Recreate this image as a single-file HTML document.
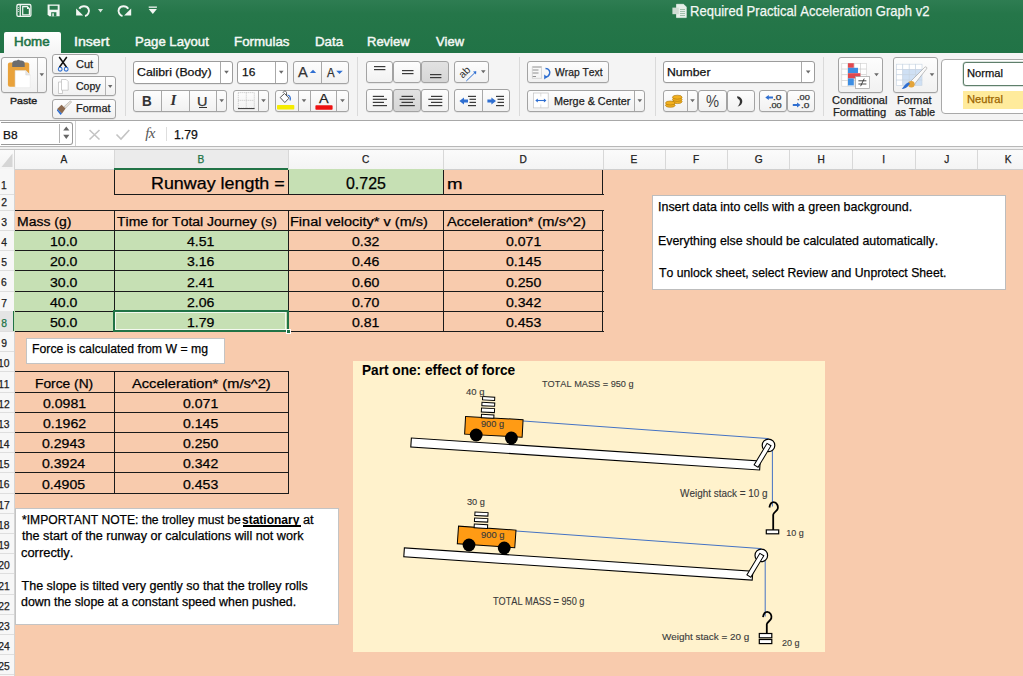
<!DOCTYPE html><html><head><meta charset="utf-8"><style>html,body{margin:0;padding:0;}body{width:1023px;height:676px;overflow:hidden;position:relative;background:#F8CBAD;font-family:'Liberation Sans', sans-serif;}.t{position:absolute;font-family:'Liberation Sans', sans-serif;white-space:pre;font-kerning:none;transform-origin:0 0;-webkit-text-stroke:0.25px;}</style></head><body>
<div style="position:absolute;left:4.00px;top:32.00px;width:56.60px;height:21.00px;background:linear-gradient(#ffffff,#f3f3f3);border-radius:3px 3px 0 0;"></div>
<div style="position:absolute;left:0.00px;top:53.00px;width:1023.00px;height:67.00px;background:#f3f3f3;"></div>
<div style="position:absolute;left:0.00px;top:120.00px;width:1023.00px;height:1.00px;background:#a8a8a8;"></div>
<div style="position:absolute;left:0.00px;top:121.00px;width:1023.00px;height:25.50px;background:#fff;"></div>
<div style="position:absolute;left:0.00px;top:146.00px;width:1023.00px;height:1.00px;background:#b8b8b8;"></div>
<div style="position:absolute;left:0.00px;top:147.00px;width:1023.00px;height:1.50px;background:#f0f0f0;"></div>
<div style="position:absolute;left:0.00px;top:148.50px;width:1023.00px;height:1.00px;background:#c4c4c4;"></div>
<div style="position:absolute;left:0.00px;top:149.50px;width:1023.00px;height:19.50px;background:linear-gradient(#fbfbfb,#f4f4f4);"></div>
<div style="position:absolute;left:114.00px;top:149.50px;width:174.00px;height:19.50px;background:#ebebeb;"></div>
<div style="position:absolute;left:113.50px;top:150.00px;width:1.00px;height:19.00px;background:#d8d8d8;"></div>
<div style="position:absolute;left:287.50px;top:150.00px;width:1.00px;height:19.00px;background:#d8d8d8;"></div>
<div style="position:absolute;left:443.00px;top:150.00px;width:1.00px;height:19.00px;background:#d8d8d8;"></div>
<div style="position:absolute;left:602.50px;top:150.00px;width:1.00px;height:19.00px;background:#d8d8d8;"></div>
<div style="position:absolute;left:664.50px;top:150.00px;width:1.00px;height:19.00px;background:#d8d8d8;"></div>
<div style="position:absolute;left:727.10px;top:150.00px;width:1.00px;height:19.00px;background:#d8d8d8;"></div>
<div style="position:absolute;left:789.30px;top:150.00px;width:1.00px;height:19.00px;background:#d8d8d8;"></div>
<div style="position:absolute;left:852.00px;top:150.00px;width:1.00px;height:19.00px;background:#d8d8d8;"></div>
<div style="position:absolute;left:914.50px;top:150.00px;width:1.00px;height:19.00px;background:#d8d8d8;"></div>
<div style="position:absolute;left:977.30px;top:150.00px;width:1.00px;height:19.00px;background:#d8d8d8;"></div>
<div style="position:absolute;left:0.00px;top:168.50px;width:1023.00px;height:1.00px;background:#cfcfcf;"></div>
<div style="position:absolute;left:0.00px;top:169.00px;width:14.00px;height:507.00px;background:#f7f7f7;"></div>
<div style="position:absolute;left:13.50px;top:149.50px;width:1.00px;height:526.50px;background:#d4d4d4;"></div>
<div style="position:absolute;left:0.00px;top:193.50px;width:14.00px;height:1.00px;background:#dedede;"></div>
<div style="position:absolute;left:0.00px;top:209.80px;width:14.00px;height:1.00px;background:#dedede;"></div>
<div style="position:absolute;left:0.00px;top:230.00px;width:14.00px;height:1.00px;background:#dedede;"></div>
<div style="position:absolute;left:0.00px;top:250.20px;width:14.00px;height:1.00px;background:#dedede;"></div>
<div style="position:absolute;left:0.00px;top:270.40px;width:14.00px;height:1.00px;background:#dedede;"></div>
<div style="position:absolute;left:0.00px;top:290.60px;width:14.00px;height:1.00px;background:#dedede;"></div>
<div style="position:absolute;left:0.00px;top:310.80px;width:14.00px;height:1.00px;background:#dedede;"></div>
<div style="position:absolute;left:0.00px;top:331.00px;width:14.00px;height:1.00px;background:#dedede;"></div>
<div style="position:absolute;left:0.00px;top:351.20px;width:14.00px;height:1.00px;background:#dedede;"></div>
<div style="position:absolute;left:0.00px;top:371.40px;width:14.00px;height:1.00px;background:#dedede;"></div>
<div style="position:absolute;left:0.00px;top:391.60px;width:14.00px;height:1.00px;background:#dedede;"></div>
<div style="position:absolute;left:0.00px;top:411.80px;width:14.00px;height:1.00px;background:#dedede;"></div>
<div style="position:absolute;left:0.00px;top:432.00px;width:14.00px;height:1.00px;background:#dedede;"></div>
<div style="position:absolute;left:0.00px;top:452.20px;width:14.00px;height:1.00px;background:#dedede;"></div>
<div style="position:absolute;left:0.00px;top:472.40px;width:14.00px;height:1.00px;background:#dedede;"></div>
<div style="position:absolute;left:0.00px;top:492.60px;width:14.00px;height:1.00px;background:#dedede;"></div>
<div style="position:absolute;left:0.00px;top:512.80px;width:14.00px;height:1.00px;background:#dedede;"></div>
<div style="position:absolute;left:0.00px;top:533.00px;width:14.00px;height:1.00px;background:#dedede;"></div>
<div style="position:absolute;left:0.00px;top:553.20px;width:14.00px;height:1.00px;background:#dedede;"></div>
<div style="position:absolute;left:0.00px;top:573.40px;width:14.00px;height:1.00px;background:#dedede;"></div>
<div style="position:absolute;left:0.00px;top:593.60px;width:14.00px;height:1.00px;background:#dedede;"></div>
<div style="position:absolute;left:0.00px;top:613.80px;width:14.00px;height:1.00px;background:#dedede;"></div>
<div style="position:absolute;left:0.00px;top:634.00px;width:14.00px;height:1.00px;background:#dedede;"></div>
<div style="position:absolute;left:0.00px;top:654.20px;width:14.00px;height:1.00px;background:#dedede;"></div>
<div style="position:absolute;left:0.00px;top:674.40px;width:14.00px;height:1.00px;background:#dedede;"></div>
<div style="position:absolute;left:0.00px;top:311.30px;width:13.50px;height:20.20px;background:#e4e4e4;"></div>
<div style="position:absolute;left:12.50px;top:311.30px;width:2.00px;height:20.20px;background:#217346;"></div>
<div class="t" style="left:60.61px;top:152px;font-size:10.17px;line-height:15px;height:15px;color:#222;">A</div>
<div class="t" style="left:197.46px;top:152px;font-size:10.17px;line-height:15px;height:15px;color:#217346;">B</div>
<div class="t" style="left:362.01px;top:152px;font-size:10.17px;line-height:15px;height:15px;color:#222;">C</div>
<div class="t" style="left:519.40px;top:152px;font-size:10.17px;line-height:15px;height:15px;color:#222;">D</div>
<div class="t" style="left:630.41px;top:152px;font-size:10.17px;line-height:15px;height:15px;color:#222;">E</div>
<div class="t" style="left:692.98px;top:152px;font-size:10.17px;line-height:15px;height:15px;color:#222;">F</div>
<div class="t" style="left:754.87px;top:152px;font-size:10.17px;line-height:15px;height:15px;color:#222;">G</div>
<div class="t" style="left:817.47px;top:152px;font-size:10.17px;line-height:15px;height:15px;color:#222;">H</div>
<div class="t" style="left:882.34px;top:152px;font-size:10.17px;line-height:15px;height:15px;color:#222;">I</div>
<div class="t" style="left:944.15px;top:152px;font-size:10.17px;line-height:15px;height:15px;color:#222;">J</div>
<div class="t" style="left:1004.75px;top:152px;font-size:10.17px;line-height:15px;height:15px;color:#222;">K</div>
<div class="t" style="left:0.99px;top:178px;font-size:10.32px;line-height:15px;height:15px;color:#222;">1</div>
<div class="t" style="left:1.13px;top:195px;font-size:10.32px;line-height:15px;height:15px;color:#222;">2</div>
<div class="t" style="left:1.16px;top:215px;font-size:10.32px;line-height:15px;height:15px;color:#222;">3</div>
<div class="t" style="left:1.16px;top:235px;font-size:10.32px;line-height:15px;height:15px;color:#222;">4</div>
<div class="t" style="left:1.14px;top:255px;font-size:10.32px;line-height:15px;height:15px;color:#222;">5</div>
<div class="t" style="left:1.10px;top:275px;font-size:10.32px;line-height:15px;height:15px;color:#222;">6</div>
<div class="t" style="left:1.13px;top:296px;font-size:10.32px;line-height:15px;height:15px;color:#222;">7</div>
<div class="t" style="left:1.13px;top:316px;font-size:10.32px;line-height:15px;height:15px;color:#217346;">8</div>
<div class="t" style="left:1.13px;top:336px;font-size:10.32px;line-height:15px;height:15px;color:#222;">9</div>
<div class="t" style="left:-1.93px;top:356px;font-size:10.32px;line-height:15px;height:15px;color:#222;">10</div>
<div class="t" style="left:-1.88px;top:377px;font-size:10.32px;line-height:15px;height:15px;color:#222;">11</div>
<div class="t" style="left:-1.87px;top:397px;font-size:10.32px;line-height:15px;height:15px;color:#222;">12</div>
<div class="t" style="left:-1.91px;top:417px;font-size:10.32px;line-height:15px;height:15px;color:#222;">13</div>
<div class="t" style="left:-1.98px;top:437px;font-size:10.32px;line-height:15px;height:15px;color:#222;">14</div>
<div class="t" style="left:-1.92px;top:457px;font-size:10.32px;line-height:15px;height:15px;color:#222;">15</div>
<div class="t" style="left:-1.91px;top:477px;font-size:10.32px;line-height:15px;height:15px;color:#222;">16</div>
<div class="t" style="left:-1.87px;top:498px;font-size:10.32px;line-height:15px;height:15px;color:#222;">17</div>
<div class="t" style="left:-1.91px;top:518px;font-size:10.32px;line-height:15px;height:15px;color:#222;">18</div>
<div class="t" style="left:-1.89px;top:538px;font-size:10.32px;line-height:15px;height:15px;color:#222;">19</div>
<div class="t" style="left:-1.80px;top:558px;font-size:10.32px;line-height:15px;height:15px;color:#222;">20</div>
<div class="t" style="left:-1.75px;top:579px;font-size:10.32px;line-height:15px;height:15px;color:#222;">21</div>
<div class="t" style="left:-1.74px;top:599px;font-size:10.32px;line-height:15px;height:15px;color:#222;">22</div>
<div class="t" style="left:-1.77px;top:619px;font-size:10.32px;line-height:15px;height:15px;color:#222;">23</div>
<div class="t" style="left:-1.85px;top:639px;font-size:10.32px;line-height:15px;height:15px;color:#222;">24</div>
<div class="t" style="left:-1.78px;top:659px;font-size:10.32px;line-height:15px;height:15px;color:#222;">25</div>
<div style="position:absolute;left:288.00px;top:169.00px;width:155.50px;height:25.00px;background:#C6E0B4;"></div>
<div style="position:absolute;left:14.00px;top:230.50px;width:274.00px;height:101.00px;background:#C6E0B4;"></div>
<div style="position:absolute;left:114.00px;top:168.00px;width:174.00px;height:2.00px;background:#217346;"></div>
<div style="position:absolute;left:114.00px;top:194.00px;width:490.00px;height:1.00px;background:#1a1a1a;"></div>
<div style="position:absolute;left:114.00px;top:170.00px;width:1.00px;height:24.50px;background:#1a1a1a;"></div>
<div style="position:absolute;left:288.00px;top:170.00px;width:1.00px;height:24.50px;background:#1a1a1a;"></div>
<div style="position:absolute;left:443.00px;top:170.00px;width:1.00px;height:24.50px;background:#1a1a1a;"></div>
<div style="position:absolute;left:602.00px;top:170.00px;width:1.00px;height:24.50px;background:#1a1a1a;"></div>
<div style="position:absolute;left:14.50px;top:210.00px;width:589.50px;height:1.00px;background:#1a1a1a;"></div>
<div style="position:absolute;left:14.50px;top:230.00px;width:589.50px;height:1.00px;background:#1a1a1a;"></div>
<div style="position:absolute;left:14.50px;top:250.00px;width:589.50px;height:1.00px;background:#1a1a1a;"></div>
<div style="position:absolute;left:14.50px;top:270.00px;width:589.50px;height:1.00px;background:#1a1a1a;"></div>
<div style="position:absolute;left:14.50px;top:291.00px;width:589.50px;height:1.00px;background:#1a1a1a;"></div>
<div style="position:absolute;left:14.50px;top:311.00px;width:589.50px;height:1.00px;background:#1a1a1a;"></div>
<div style="position:absolute;left:14.50px;top:331.00px;width:589.50px;height:1.00px;background:#1a1a1a;"></div>
<div style="position:absolute;left:114.00px;top:210.30px;width:1.00px;height:121.70px;background:#1a1a1a;"></div>
<div style="position:absolute;left:288.00px;top:210.30px;width:1.00px;height:121.70px;background:#1a1a1a;"></div>
<div style="position:absolute;left:443.00px;top:210.30px;width:1.00px;height:121.70px;background:#1a1a1a;"></div>
<div style="position:absolute;left:602.00px;top:210.30px;width:1.00px;height:121.70px;background:#1a1a1a;"></div>
<div style="position:absolute;left:14.50px;top:371.00px;width:274.50px;height:1.00px;background:#1a1a1a;"></div>
<div style="position:absolute;left:14.50px;top:392.00px;width:274.50px;height:1.00px;background:#1a1a1a;"></div>
<div style="position:absolute;left:14.50px;top:412.00px;width:274.50px;height:1.00px;background:#1a1a1a;"></div>
<div style="position:absolute;left:14.50px;top:432.00px;width:274.50px;height:1.00px;background:#1a1a1a;"></div>
<div style="position:absolute;left:14.50px;top:452.00px;width:274.50px;height:1.00px;background:#1a1a1a;"></div>
<div style="position:absolute;left:14.50px;top:472.00px;width:274.50px;height:1.00px;background:#1a1a1a;"></div>
<div style="position:absolute;left:14.50px;top:493.00px;width:274.50px;height:1.00px;background:#1a1a1a;"></div>
<div style="position:absolute;left:114.00px;top:371.90px;width:1.00px;height:121.70px;background:#1a1a1a;"></div>
<div style="position:absolute;left:288.00px;top:371.90px;width:1.00px;height:121.70px;background:#1a1a1a;"></div>
<div class="t" style="left:150.83px;top:174px;font-size:15.99px;line-height:20px;height:20px;transform:scaleX(1.1188);">Runway length =</div>
<div class="t" style="left:345.78px;top:174px;font-size:15.99px;line-height:20px;height:20px;transform:scaleX(0.9971);">0.725</div>
<div class="t" style="left:446.76px;top:174px;font-size:15.14px;line-height:20px;height:20px;transform:scaleX(1.2346);">m</div>
<div class="t" style="left:16.65px;top:213px;font-size:13.08px;line-height:18px;height:18px;transform:scaleX(1.0696);">Mass (g)</div>
<div class="t" style="left:116.79px;top:213px;font-size:13.08px;line-height:18px;height:18px;transform:scaleX(1.0683);">Time for Total Journey (s)</div>
<div class="t" style="left:289.71px;top:213px;font-size:13.08px;line-height:18px;height:18px;transform:scaleX(1.1094);">Final velocity* v (m/s)</div>
<div class="t" style="left:446.77px;top:213px;font-size:13.08px;line-height:18px;height:18px;transform:scaleX(1.1213);">Acceleration* (m/s^2)</div>
<div class="t" style="left:50.03px;top:233px;font-size:13.08px;line-height:18px;height:18px;transform:scaleX(1.0771);">10.0</div>
<div class="t" style="left:187.47px;top:233px;font-size:13.08px;line-height:18px;height:18px;transform:scaleX(1.0771);">4.51</div>
<div class="t" style="left:352.12px;top:233px;font-size:13.08px;line-height:18px;height:18px;transform:scaleX(1.0771);">0.32</div>
<div class="t" style="left:505.69px;top:233px;font-size:13.08px;line-height:18px;height:18px;transform:scaleX(1.0771);">0.071</div>
<div class="t" style="left:50.21px;top:253px;font-size:13.08px;line-height:18px;height:18px;transform:scaleX(1.0771);">20.0</div>
<div class="t" style="left:187.33px;top:253px;font-size:13.08px;line-height:18px;height:18px;transform:scaleX(1.0771);">3.16</div>
<div class="t" style="left:352.07px;top:253px;font-size:13.08px;line-height:18px;height:18px;transform:scaleX(1.0771);">0.46</div>
<div class="t" style="left:505.64px;top:253px;font-size:13.08px;line-height:18px;height:18px;transform:scaleX(1.0771);">0.145</div>
<div class="t" style="left:50.30px;top:274px;font-size:13.08px;line-height:18px;height:18px;transform:scaleX(1.0771);">30.0</div>
<div class="t" style="left:187.28px;top:274px;font-size:13.08px;line-height:18px;height:18px;transform:scaleX(1.0771);">2.41</div>
<div class="t" style="left:352.04px;top:274px;font-size:13.08px;line-height:18px;height:18px;transform:scaleX(1.0771);">0.60</div>
<div class="t" style="left:505.62px;top:274px;font-size:13.08px;line-height:18px;height:18px;transform:scaleX(1.0771);">0.250</div>
<div class="t" style="left:50.40px;top:294px;font-size:13.08px;line-height:18px;height:18px;transform:scaleX(1.0771);">40.0</div>
<div class="t" style="left:187.24px;top:294px;font-size:13.08px;line-height:18px;height:18px;transform:scaleX(1.0771);">2.06</div>
<div class="t" style="left:352.04px;top:294px;font-size:13.08px;line-height:18px;height:18px;transform:scaleX(1.0771);">0.70</div>
<div class="t" style="left:505.70px;top:294px;font-size:13.08px;line-height:18px;height:18px;transform:scaleX(1.0771);">0.342</div>
<div class="t" style="left:50.28px;top:314px;font-size:13.08px;line-height:18px;height:18px;transform:scaleX(1.0771);">50.0</div>
<div class="t" style="left:187.09px;top:314px;font-size:13.08px;line-height:18px;height:18px;transform:scaleX(1.0771);">1.79</div>
<div class="t" style="left:352.11px;top:314px;font-size:13.08px;line-height:18px;height:18px;transform:scaleX(1.0771);">0.81</div>
<div class="t" style="left:505.65px;top:314px;font-size:13.08px;line-height:18px;height:18px;transform:scaleX(1.0771);">0.453</div>
<div class="t" style="left:34.87px;top:375px;font-size:13.08px;line-height:18px;height:18px;transform:scaleX(1.0535);">Force (N)</div>
<div class="t" style="left:132.37px;top:375px;font-size:13.08px;line-height:18px;height:18px;transform:scaleX(1.1197);">Acceleration* (m/s^2)</div>
<div class="t" style="left:42.52px;top:395px;font-size:13.08px;line-height:18px;height:18px;transform:scaleX(1.0771);">0.0981</div>
<div class="t" style="left:183.44px;top:395px;font-size:13.08px;line-height:18px;height:18px;transform:scaleX(1.0771);">0.071</div>
<div class="t" style="left:42.53px;top:415px;font-size:13.08px;line-height:18px;height:18px;transform:scaleX(1.0771);">0.1962</div>
<div class="t" style="left:183.39px;top:415px;font-size:13.08px;line-height:18px;height:18px;transform:scaleX(1.0771);">0.145</div>
<div class="t" style="left:42.49px;top:435px;font-size:13.08px;line-height:18px;height:18px;transform:scaleX(1.0771);">0.2943</div>
<div class="t" style="left:183.37px;top:435px;font-size:13.08px;line-height:18px;height:18px;transform:scaleX(1.0771);">0.250</div>
<div class="t" style="left:42.38px;top:455px;font-size:13.08px;line-height:18px;height:18px;transform:scaleX(1.0771);">0.3924</div>
<div class="t" style="left:183.45px;top:455px;font-size:13.08px;line-height:18px;height:18px;transform:scaleX(1.0771);">0.342</div>
<div class="t" style="left:42.47px;top:476px;font-size:13.08px;line-height:18px;height:18px;transform:scaleX(1.0771);">0.4905</div>
<div class="t" style="left:183.40px;top:476px;font-size:13.08px;line-height:18px;height:18px;transform:scaleX(1.0771);">0.453</div>
<div style="position:absolute;left:112.50px;top:310.30px;width:176.00px;height:21.70px;border:2px solid #217346;box-sizing:border-box;"></div>
<div style="position:absolute;left:114.50px;top:312.30px;width:171.00px;height:17.70px;border:1px solid rgba(255,255,255,0.8);box-sizing:border-box;"></div>
<div style="position:absolute;left:285.50px;top:329.00px;width:5.00px;height:5.00px;background:#217346;border:0.5px solid #fff;box-sizing:border-box;"></div>
<div style="position:absolute;left:652.00px;top:195.20px;width:353.60px;height:95.30px;background:#fff;border:1px solid #bdbdbd;box-sizing:border-box;"></div>
<div class="t" style="left:657.95px;top:198px;font-size:13.37px;line-height:18px;height:18px;transform:scaleX(0.9325);">Insert data into cells with a green background.</div>
<div class="t" style="left:658.08px;top:232px;font-size:13.37px;line-height:18px;height:18px;transform:scaleX(0.9267);">Everything else should be calculated automatically.</div>
<div class="t" style="left:658.83px;top:264px;font-size:13.37px;line-height:18px;height:18px;transform:scaleX(0.9153);">To unlock sheet, select Review and Unprotect Sheet.</div>
<div style="position:absolute;left:26.20px;top:338.00px;width:199.20px;height:26.00px;background:#fff;border:1px solid #c4c4c4;box-sizing:border-box;"></div>
<div class="t" style="left:32.19px;top:340px;font-size:13.37px;line-height:18px;height:18px;transform:scaleX(0.9172);">Force is calculated from W = mg</div>
<div style="position:absolute;left:14.50px;top:508.10px;width:324.70px;height:117.00px;background:#fff;border:1px solid #c4c4c4;box-sizing:border-box;"></div>
<div class="t" style="left:21.70px;top:512px;font-size:12.50px;line-height:17px;height:17px;transform:scaleX(0.9689);">*IMPORTANT NOTE: the trolley must be</div>
<div class="t" style="left:242.38px;top:512px;font-size:12.50px;line-height:17px;height:17px;font-weight:bold;transform:scaleX(0.9606);-webkit-text-stroke:0.05px;">stationary</div>
<div style="position:absolute;left:243.00px;top:525.30px;width:57.60px;height:1.30px;background:#000;"></div>
<div class="t" style="left:302.66px;top:512px;font-size:12.50px;line-height:17px;height:17px;transform:scaleX(1.0202);">at</div>
<div class="t" style="left:21.71px;top:528px;font-size:12.50px;line-height:17px;height:17px;transform:scaleX(1.0103);">the start of the runway or calculations will not work</div>
<div class="t" style="left:21.35px;top:545px;font-size:12.50px;line-height:17px;height:17px;transform:scaleX(1.0320);">correctly.</div>
<div class="t" style="left:21.62px;top:578px;font-size:12.50px;line-height:17px;height:17px;">The slope is tilted very gently so that the trolley rolls</div>
<div class="t" style="left:21.38px;top:594px;font-size:12.50px;line-height:17px;height:17px;transform:scaleX(0.9898);">down the slope at a constant speed when pushed.</div>
<div style="position:absolute;left:353.00px;top:361.00px;width:472.00px;height:291.00px;background:#FFF2CC;"></div>
<svg style="position:absolute;left:0;top:0" width="1023" height="676" viewBox="0 0 1023 676"><rect x="410.70" y="449.50" width="349.60" height="9.00" rx="0" fill="#fff" stroke="#000" stroke-width="1.1" transform="rotate(3.78 585.50 454.00)"/><line x1="523.2" y1="421.0" x2="768.5" y2="438.6" stroke="#4472C4" stroke-width="1"/><line x1="772.4" y1="445" x2="772.4" y2="506.5" stroke="#4472C4" stroke-width="1"/><circle cx="768.5" cy="445.4" r="6.3" fill="#fff" stroke="#000" stroke-width="1.2"/><rect x="750.00" y="453.00" width="25.10" height="4.60" rx="0" fill="#fff" stroke="#000" stroke-width="1.0" transform="rotate(-58.99 762.55 455.30)"/><rect x="465.05" y="418.10" width="57.60" height="17.60" rx="0" fill="#FF9B14" stroke="#000" stroke-width="1.0" transform="rotate(3.10 493.85 426.90)"/><circle cx="476.2" cy="435" r="6.4" fill="#000"/><circle cx="511.4" cy="438" r="6.4" fill="#000"/><rect x="403.70" y="559.50" width="349.20" height="9.00" rx="0" fill="#fff" stroke="#000" stroke-width="1.1" transform="rotate(3.83 578.30 564.00)"/><line x1="516.0" y1="531.0" x2="761.3" y2="548.6" stroke="#4472C4" stroke-width="1"/><line x1="765.1999999999999" y1="555.0" x2="765.1999999999999" y2="616.5" stroke="#4472C4" stroke-width="1"/><circle cx="761.3" cy="555.4" r="6.3" fill="#fff" stroke="#000" stroke-width="1.2"/><rect x="742.80" y="563.00" width="25.10" height="4.60" rx="0" fill="#fff" stroke="#000" stroke-width="1.0" transform="rotate(-58.99 755.35 565.30)"/><rect x="457.85" y="528.10" width="57.60" height="17.60" rx="0" fill="#FF9B14" stroke="#000" stroke-width="1.0" transform="rotate(4.00 486.65 536.90)"/><circle cx="469.0" cy="545.0" r="6.4" fill="#000"/><circle cx="504.2" cy="548.0" r="6.4" fill="#000"/><rect x="482.60" y="396.90" width="12.10" height="3.30" rx="0" fill="#fff" stroke="#000" stroke-width="1.0" transform="rotate(3.00 488.65 398.55)"/><rect x="481.90" y="402.60" width="12.80" height="3.40" rx="0" fill="#fff" stroke="#000" stroke-width="1.0" transform="rotate(3.00 488.30 404.30)"/><rect x="481.40" y="408.30" width="13.10" height="4.00" rx="0" fill="#fff" stroke="#000" stroke-width="1.0" transform="rotate(3.00 487.95 410.30)"/><rect x="481.40" y="414.60" width="12.50" height="3.40" rx="0" fill="#fff" stroke="#000" stroke-width="1.0" transform="rotate(3.00 487.65 416.30)"/><rect x="474.90" y="512.30" width="13.10" height="3.50" rx="0" fill="#fff" stroke="#000" stroke-width="1.0" transform="rotate(3.00 481.45 514.05)"/><rect x="474.50" y="518.30" width="13.30" height="3.50" rx="0" fill="#fff" stroke="#000" stroke-width="1.0" transform="rotate(3.00 481.15 520.05)"/><rect x="474.20" y="524.30" width="13.40" height="3.80" rx="0" fill="#fff" stroke="#000" stroke-width="1.0" transform="rotate(3.00 480.90 526.20)"/><path d="M769.4,507.5 C769.9,504.2 771.9,502.2 773.6,502.2 C776.9,502.2 778.4,506.2 777.6999999999999,508.7 C777.1999999999999,511.2 773.4,512.2 773.1999999999999,514.7 L773.1999999999999,530" fill="none" stroke="#000" stroke-width="1.8"/><rect x="766.30" y="529.90" width="12.40" height="3.90" rx="0" fill="#fff" stroke="#000" stroke-width="1.2" transform="rotate(0.00 772.50 531.85)"/><path d="M763.0,617.0999999999999 C763.5,613.8 765.5,611.8 767.2,611.8 C770.5,611.8 772.0,615.8 771.3,618.3 C770.8,620.8 767.0,621.8 766.8,624.3 L766.8,633.5" fill="none" stroke="#000" stroke-width="1.8"/><rect x="759.30" y="633.50" width="12.50" height="4.30" rx="0" fill="#fff" stroke="#000" stroke-width="1.2" transform="rotate(0.00 765.55 635.65)"/><rect x="759.30" y="639.50" width="12.50" height="4.10" rx="0" fill="#fff" stroke="#000" stroke-width="1.2" transform="rotate(0.00 765.55 641.55)"/></svg>
<div class="t" style="left:361.99px;top:361px;font-size:14.24px;line-height:19px;height:19px;font-weight:bold;transform:scaleX(0.9587);-webkit-text-stroke:0.05px;">Part one: effect of force</div>
<div class="t" style="left:541.89px;top:377px;font-size:9.88px;line-height:14px;height:14px;color:#3a3a3a;transform:scaleX(0.9300);-webkit-text-stroke:0.12px;">TOTAL MASS = 950 g</div>
<div class="t" style="left:466.18px;top:386px;font-size:8.72px;line-height:13px;height:13px;color:#3a3a3a;transform:scaleX(1.0857);-webkit-text-stroke:0.12px;">40 g</div>
<div class="t" style="left:480.57px;top:418px;font-size:8.72px;line-height:13px;height:13px;color:#3a3a3a;transform:scaleX(1.0550);-webkit-text-stroke:0.12px;">900 g</div>
<div class="t" style="left:679.66px;top:486px;font-size:10.47px;line-height:15px;height:15px;color:#3a3a3a;transform:scaleX(0.9500);-webkit-text-stroke:0.12px;">Weight stack = 10 g</div>
<div class="t" style="left:786.31px;top:526px;font-size:9.01px;line-height:14px;height:14px;color:#3a3a3a;-webkit-text-stroke:0.12px;">10 g</div>
<div class="t" style="left:466.65px;top:495px;font-size:9.01px;line-height:14px;height:14px;color:#3a3a3a;transform:scaleX(1.0232);-webkit-text-stroke:0.12px;">30 g</div>
<div class="t" style="left:480.56px;top:529px;font-size:8.72px;line-height:13px;height:13px;color:#3a3a3a;transform:scaleX(1.0790);-webkit-text-stroke:0.12px;">900 g</div>
<div class="t" style="left:493.09px;top:594px;font-size:10.17px;line-height:15px;height:15px;color:#3a3a3a;transform:scaleX(0.9024);-webkit-text-stroke:0.12px;">TOTAL MASS = 950 g</div>
<div class="t" style="left:662.46px;top:630px;font-size:9.88px;line-height:14px;height:14px;color:#3a3a3a;transform:scaleX(1.0035);-webkit-text-stroke:0.12px;">Weight stack = 20 g</div>
<div class="t" style="left:781.94px;top:636px;font-size:9.01px;line-height:14px;height:14px;color:#3a3a3a;transform:scaleX(1.0057);-webkit-text-stroke:0.12px;">20 g</div>
<div style="position:absolute;left:0.00px;top:0.00px;width:1023.00px;height:53.00px;background:linear-gradient(#2e7d52 0px,#257649 14px,#217346 53px);"></div>
<div style="position:absolute;left:4.00px;top:32.00px;width:56.60px;height:21.00px;background:linear-gradient(#ffffff,#f4f4f4);border-radius:2px 2px 0 0;"></div>
<div style="position:absolute;left:0.00px;top:53.00px;width:1023.00px;height:67.00px;background:#f4f4f4;"></div>
<div style="position:absolute;left:0.00px;top:120.00px;width:1023.00px;height:1.00px;background:#a8a8a8;"></div>
<div class="t" style="left:689.53px;top:2px;font-size:14.53px;line-height:19px;height:19px;color:#f4f8f5;transform:scaleX(0.8996);">Required Practical Acceleration Graph v2</div>
<div class="t" style="left:13.90px;top:33px;font-size:12.79px;line-height:17px;height:17px;color:#217346;transform:scaleX(1.0461);-webkit-text-stroke:0.55px;">Home</div>
<div class="t" style="left:73.69px;top:33px;font-size:12.79px;line-height:17px;height:17px;color:#f4f8f5;transform:scaleX(1.1069);-webkit-text-stroke:0.45px;">Insert</div>
<div class="t" style="left:134.52px;top:33px;font-size:12.79px;line-height:17px;height:17px;color:#f4f8f5;transform:scaleX(1.0285);-webkit-text-stroke:0.45px;">Page Layout</div>
<div class="t" style="left:234.11px;top:33px;font-size:12.79px;line-height:17px;height:17px;color:#f4f8f5;transform:scaleX(1.0407);-webkit-text-stroke:0.45px;">Formulas</div>
<div class="t" style="left:314.51px;top:33px;font-size:12.79px;line-height:17px;height:17px;color:#f4f8f5;transform:scaleX(1.0397);-webkit-text-stroke:0.45px;">Data</div>
<div class="t" style="left:367.33px;top:33px;font-size:12.79px;line-height:17px;height:17px;color:#f4f8f5;transform:scaleX(1.0166);-webkit-text-stroke:0.45px;">Review</div>
<div class="t" style="left:435.94px;top:33px;font-size:12.79px;line-height:17px;height:17px;color:#f4f8f5;transform:scaleX(1.0109);-webkit-text-stroke:0.45px;">View</div>
<div style="position:absolute;left:1.20px;top:57.00px;width:45.60px;height:35.80px;background:linear-gradient(#fdfdfd,#f1f1f1);border:1px solid #a3a3a3;border-radius:3px;box-sizing:border-box;box-shadow:0 0.5px 0.5px rgba(0,0,0,0.12);"></div>
<div style="position:absolute;left:36.50px;top:58.00px;width:1.60px;height:34.00px;background:#b8b8b8;"></div>
<div class="t" style="left:10.13px;top:94px;font-size:9.88px;line-height:14px;height:14px;color:#222;transform:scaleX(1.0739);-webkit-text-stroke:0.4px;">Paste</div>
<div style="position:absolute;left:51.50px;top:54.40px;width:47.00px;height:19.70px;background:linear-gradient(#fdfdfd,#f1f1f1);border:1px solid #a3a3a3;border-radius:3px;box-sizing:border-box;box-shadow:0 0.5px 0.5px rgba(0,0,0,0.12);"></div>
<div style="position:absolute;left:51.50px;top:76.40px;width:64.10px;height:20.00px;background:linear-gradient(#fdfdfd,#f1f1f1);border:1px solid #a3a3a3;border-radius:3px;box-sizing:border-box;box-shadow:0 0.5px 0.5px rgba(0,0,0,0.12);"></div>
<div style="position:absolute;left:104.80px;top:77.40px;width:1.00px;height:18.00px;background:#b4b4b4;"></div>
<div style="position:absolute;left:51.50px;top:98.50px;width:64.10px;height:20.10px;background:linear-gradient(#fdfdfd,#f1f1f1);border:1px solid #a3a3a3;border-radius:3px;box-sizing:border-box;box-shadow:0 0.5px 0.5px rgba(0,0,0,0.12);"></div>
<div class="t" style="left:76.34px;top:57px;font-size:10.17px;line-height:15px;height:15px;color:#222;transform:scaleX(1.0826);">Cut</div>
<div class="t" style="left:76.36px;top:79px;font-size:10.17px;line-height:15px;height:15px;color:#222;transform:scaleX(1.0381);">Copy</div>
<div class="t" style="left:76.00px;top:101px;font-size:10.17px;line-height:15px;height:15px;color:#222;transform:scaleX(1.0730);">Format</div>
<div style="position:absolute;left:124.50px;top:57.00px;width:1.00px;height:59.00px;background:#dadada;"></div>
<div style="position:absolute;left:133.00px;top:60.70px;width:100.40px;height:23.10px;background:#fff;border:1px solid #9c9c9c;border-radius:3px;box-sizing:border-box;box-shadow:0 0.5px 0.5px rgba(0,0,0,0.1);"></div>
<div style="position:absolute;left:219.60px;top:61.70px;width:1.00px;height:21.10px;background:#a9a9a9;"></div>
<div class="t" style="left:137.07px;top:64px;font-size:11.34px;line-height:16px;height:16px;color:#111;transform:scaleX(1.0862);">Calibri (Body)</div>
<div style="position:absolute;left:237.40px;top:60.70px;width:50.60px;height:23.10px;background:#fff;border:1px solid #9c9c9c;border-radius:3px;box-sizing:border-box;box-shadow:0 0.5px 0.5px rgba(0,0,0,0.1);"></div>
<div style="position:absolute;left:274.50px;top:61.70px;width:1.00px;height:21.10px;background:#a9a9a9;"></div>
<div class="t" style="left:241.79px;top:64px;font-size:11.34px;line-height:16px;height:16px;color:#111;transform:scaleX(1.0579);">16</div>
<div style="position:absolute;left:292.50px;top:60.70px;width:56.20px;height:23.10px;background:linear-gradient(#fdfdfd,#f1f1f1);border:1px solid #a3a3a3;border-radius:3px;box-sizing:border-box;box-shadow:0 0.5px 0.5px rgba(0,0,0,0.12);"></div>
<div style="position:absolute;left:320.60px;top:61.70px;width:1.00px;height:21.10px;background:#a9a9a9;"></div>
<div class="t" style="left:297.97px;top:63px;font-size:14.83px;line-height:19px;height:19px;color:#333;transform:scaleX(0.9867);">A</div>
<div class="t" style="left:326.78px;top:65px;font-size:11.92px;line-height:16px;height:16px;color:#333;transform:scaleX(0.9617);">A</div>
<div style="position:absolute;left:133.00px;top:89.50px;width:94.40px;height:22.40px;background:linear-gradient(#fdfdfd,#f1f1f1);border:1px solid #a3a3a3;border-radius:3px;box-sizing:border-box;box-shadow:0 0.5px 0.5px rgba(0,0,0,0.12);"></div>
<div style="position:absolute;left:160.70px;top:90.50px;width:1.00px;height:20.40px;background:#a9a9a9;"></div>
<div style="position:absolute;left:188.80px;top:90.50px;width:1.00px;height:20.40px;background:#a9a9a9;"></div>
<div style="position:absolute;left:215.60px;top:90.50px;width:1.00px;height:20.40px;background:#a9a9a9;"></div>
<div class="t" style="left:142.10px;top:92px;font-size:13.95px;line-height:18px;height:18px;color:#333;font-weight:bold;transform:scaleX(0.9636);-webkit-text-stroke:0.1px;">B</div>
<div style="position:absolute;left:170.6px;top:91.6px;font-family:'Liberation Serif',serif;font-style:italic;font-weight:bold;font-size:15px;line-height:16px;color:#333;">I</div>
<div class="t" style="left:197.49px;top:93px;font-size:13.37px;line-height:18px;height:18px;color:#333;transform:scaleX(1.0799);">U</div>
<div style="position:absolute;left:198.60px;top:107.20px;width:8.40px;height:1.10px;background:#333;"></div>
<div style="position:absolute;left:232.50px;top:89.50px;width:36.40px;height:22.40px;background:linear-gradient(#fdfdfd,#f1f1f1);border:1px solid #a3a3a3;border-radius:3px;box-sizing:border-box;box-shadow:0 0.5px 0.5px rgba(0,0,0,0.12);"></div>
<div style="position:absolute;left:258.00px;top:90.50px;width:1.00px;height:20.40px;background:#a9a9a9;"></div>
<div style="position:absolute;left:274.50px;top:89.50px;width:74.20px;height:22.40px;background:linear-gradient(#fdfdfd,#f1f1f1);border:1px solid #a3a3a3;border-radius:3px;box-sizing:border-box;box-shadow:0 0.5px 0.5px rgba(0,0,0,0.12);"></div>
<div style="position:absolute;left:298.00px;top:90.50px;width:1.00px;height:20.40px;background:#a9a9a9;"></div>
<div style="position:absolute;left:309.80px;top:90.50px;width:1.00px;height:20.40px;background:#a9a9a9;"></div>
<div style="position:absolute;left:336.30px;top:90.50px;width:1.00px;height:20.40px;background:#a9a9a9;"></div>
<div class="t" style="left:319.17px;top:90px;font-size:13.66px;line-height:18px;height:18px;color:#222;transform:scaleX(1.0596);">A</div>
<div style="position:absolute;left:356.70px;top:57.00px;width:1.00px;height:59.00px;background:#dadada;"></div>
<div style="position:absolute;left:365.50px;top:61.00px;width:27.80px;height:22.40px;background:linear-gradient(#fdfdfd,#f1f1f1);border:1px solid #a3a3a3;border-radius:3px;box-sizing:border-box;box-shadow:0 0.5px 0.5px rgba(0,0,0,0.12);"></div>
<div style="position:absolute;left:393.30px;top:61.00px;width:28.00px;height:22.40px;background:linear-gradient(#fdfdfd,#f1f1f1);border:1px solid #a3a3a3;border-radius:3px;box-sizing:border-box;box-shadow:0 0.5px 0.5px rgba(0,0,0,0.12);"></div>
<div style="position:absolute;left:421.30px;top:61.00px;width:28.20px;height:22.40px;background:linear-gradient(#e2e2e2,#d6d6d6);border:1px solid #a3a3a3;border-radius:3px;box-sizing:border-box;box-shadow:0 0.5px 0.5px rgba(0,0,0,0.12);"></div>
<div style="position:absolute;left:454.20px;top:61.00px;width:34.90px;height:22.40px;background:linear-gradient(#fdfdfd,#f1f1f1);border:1px solid #a3a3a3;border-radius:3px;box-sizing:border-box;box-shadow:0 0.5px 0.5px rgba(0,0,0,0.12);"></div>
<div style="position:absolute;left:365.50px;top:89.30px;width:27.80px;height:22.70px;background:linear-gradient(#fdfdfd,#f1f1f1);border:1px solid #a3a3a3;border-radius:3px;box-sizing:border-box;box-shadow:0 0.5px 0.5px rgba(0,0,0,0.12);"></div>
<div style="position:absolute;left:393.30px;top:89.30px;width:28.00px;height:22.70px;background:linear-gradient(#e2e2e2,#d6d6d6);border:1px solid #a3a3a3;border-radius:3px;box-sizing:border-box;box-shadow:0 0.5px 0.5px rgba(0,0,0,0.12);"></div>
<div style="position:absolute;left:421.30px;top:89.30px;width:28.20px;height:22.70px;background:linear-gradient(#fdfdfd,#f1f1f1);border:1px solid #a3a3a3;border-radius:3px;box-sizing:border-box;box-shadow:0 0.5px 0.5px rgba(0,0,0,0.12);"></div>
<div style="position:absolute;left:454.20px;top:89.30px;width:56.30px;height:22.70px;background:linear-gradient(#fdfdfd,#f1f1f1);border:1px solid #a3a3a3;border-radius:3px;box-sizing:border-box;box-shadow:0 0.5px 0.5px rgba(0,0,0,0.12);"></div>
<div style="position:absolute;left:482.40px;top:90.30px;width:1.00px;height:20.70px;background:#a9a9a9;"></div>
<div style="position:absolute;left:519.00px;top:57.00px;width:1.00px;height:59.00px;background:#dadada;"></div>
<div style="position:absolute;left:527.10px;top:60.80px;width:81.60px;height:22.50px;background:linear-gradient(#fdfdfd,#f1f1f1);border:1px solid #a3a3a3;border-radius:3px;box-sizing:border-box;box-shadow:0 0.5px 0.5px rgba(0,0,0,0.12);"></div>
<div class="t" style="left:555.25px;top:65px;font-size:10.76px;line-height:15px;height:15px;color:#222;transform:scaleX(0.9580);">Wrap Text</div>
<div style="position:absolute;left:527.10px;top:89.70px;width:118.40px;height:22.20px;background:linear-gradient(#fdfdfd,#f1f1f1);border:1px solid #a3a3a3;border-radius:3px;box-sizing:border-box;box-shadow:0 0.5px 0.5px rgba(0,0,0,0.12);"></div>
<div style="position:absolute;left:634.10px;top:90.70px;width:1.00px;height:20.20px;background:#a9a9a9;"></div>
<div class="t" style="left:554.41px;top:94px;font-size:10.76px;line-height:15px;height:15px;color:#222;transform:scaleX(1.0059);">Merge &amp; Center</div>
<div style="position:absolute;left:654.50px;top:57.00px;width:1.00px;height:59.00px;background:#dadada;"></div>
<div style="position:absolute;left:662.70px;top:60.90px;width:152.30px;height:22.20px;background:#fff;border:1px solid #9c9c9c;border-radius:3px;box-sizing:border-box;box-shadow:0 0.5px 0.5px rgba(0,0,0,0.1);"></div>
<div style="position:absolute;left:801.40px;top:61.90px;width:1.00px;height:20.20px;background:#a9a9a9;"></div>
<div class="t" style="left:666.60px;top:64px;font-size:11.34px;line-height:16px;height:16px;color:#111;transform:scaleX(1.0790);">Number</div>
<div style="position:absolute;left:662.70px;top:89.60px;width:35.70px;height:22.40px;background:linear-gradient(#fdfdfd,#f1f1f1);border:1px solid #a3a3a3;border-radius:3px;box-sizing:border-box;box-shadow:0 0.5px 0.5px rgba(0,0,0,0.12);"></div>
<div style="position:absolute;left:686.60px;top:90.60px;width:1.00px;height:20.40px;background:#a9a9a9;"></div>
<div style="position:absolute;left:698.40px;top:89.60px;width:28.20px;height:22.40px;background:linear-gradient(#fdfdfd,#f1f1f1);border:1px solid #a3a3a3;border-radius:3px;box-sizing:border-box;box-shadow:0 0.5px 0.5px rgba(0,0,0,0.12);"></div>
<div class="t" style="left:705.78px;top:92px;font-size:15.99px;line-height:20px;height:20px;color:#444;transform:scaleX(0.9177);-webkit-text-stroke:0px;">%</div>
<div style="position:absolute;left:726.60px;top:89.60px;width:28.20px;height:22.40px;background:linear-gradient(#fdfdfd,#f1f1f1);border:1px solid #a3a3a3;border-radius:3px;box-sizing:border-box;box-shadow:0 0.5px 0.5px rgba(0,0,0,0.12);"></div>
<div style="position:absolute;left:759.20px;top:89.60px;width:27.80px;height:22.40px;background:linear-gradient(#fdfdfd,#f1f1f1);border:1px solid #a3a3a3;border-radius:3px;box-sizing:border-box;box-shadow:0 0.5px 0.5px rgba(0,0,0,0.12);"></div>
<div style="position:absolute;left:787.00px;top:89.60px;width:28.00px;height:22.40px;background:linear-gradient(#fdfdfd,#f1f1f1);border:1px solid #a3a3a3;border-radius:3px;box-sizing:border-box;box-shadow:0 0.5px 0.5px rgba(0,0,0,0.12);"></div>
<div class="t" style="left:773.18px;top:92px;font-size:7.56px;line-height:12px;height:12px;color:#333;transform:scaleX(1.3351);">.0</div>
<div class="t" style="left:768.87px;top:100px;font-size:7.56px;line-height:12px;height:12px;color:#333;transform:scaleX(1.2078);">.00</div>
<div class="t" style="left:796.96px;top:92px;font-size:7.56px;line-height:12px;height:12px;color:#333;transform:scaleX(1.2183);">.00</div>
<div class="t" style="left:801.38px;top:100px;font-size:7.56px;line-height:12px;height:12px;color:#333;transform:scaleX(1.3351);">.0</div>
<div style="position:absolute;left:823.40px;top:57.00px;width:1.00px;height:59.00px;background:#dadada;"></div>
<div style="position:absolute;left:837.50px;top:57.00px;width:45.00px;height:35.70px;background:linear-gradient(#fdfdfd,#f1f1f1);border:1px solid #a3a3a3;border-radius:3px;box-sizing:border-box;box-shadow:0 0.5px 0.5px rgba(0,0,0,0.12);"></div>
<div style="position:absolute;left:893.40px;top:57.00px;width:44.60px;height:35.70px;background:linear-gradient(#fdfdfd,#f1f1f1);border:1px solid #a3a3a3;border-radius:3px;box-sizing:border-box;box-shadow:0 0.5px 0.5px rgba(0,0,0,0.12);"></div>
<div class="t" style="left:832.34px;top:93px;font-size:10.47px;line-height:15px;height:15px;color:#222;transform:scaleX(1.0581);">Conditional</div>
<div class="t" style="left:832.99px;top:105px;font-size:10.47px;line-height:15px;height:15px;color:#222;transform:scaleX(1.0643);">Formatting</div>
<div class="t" style="left:897.11px;top:93px;font-size:10.47px;line-height:15px;height:15px;color:#222;transform:scaleX(1.0401);">Format</div>
<div class="t" style="left:894.96px;top:105px;font-size:10.47px;line-height:15px;height:15px;color:#222;transform:scaleX(0.9967);">as Table</div>
<div style="position:absolute;left:941.40px;top:59.00px;width:100.00px;height:55.00px;background:#fff;border:1px solid #a9a9a9;border-radius:4px;box-sizing:border-box;"></div>
<div style="position:absolute;left:962.50px;top:61.50px;width:80.00px;height:24.60px;background:#fff;border:1.5px solid #5e7f6b;border-radius:3px;box-sizing:border-box;box-shadow:0 0 0 0.5px #b9c9bf;"></div>
<div class="t" style="left:966.88px;top:65px;font-size:11.05px;line-height:16px;height:16px;color:#111;transform:scaleX(1.0102);">Normal</div>
<div style="position:absolute;left:962.50px;top:90.70px;width:80.00px;height:18.80px;background:#FFEB9C;"></div>
<div class="t" style="left:966.88px;top:91px;font-size:11.05px;line-height:16px;height:16px;color:#9C6500;transform:scaleX(1.0099);">Neutral</div>
<div style="position:absolute;left:0.50px;top:122.00px;width:72.80px;height:22.80px;background:#fff;border:1px solid #9a9a9a;border-left:none;border-radius:0 3px 3px 0;box-sizing:border-box;"></div>
<div style="position:absolute;left:58.60px;top:124.00px;width:1.00px;height:19.00px;background:#b4b4b4;"></div>
<div class="t" style="left:2.52px;top:127px;font-size:11.63px;line-height:16px;height:16px;color:#111;transform:scaleX(1.0264);">B8</div>
<div style="position:absolute;left:75.00px;top:121.00px;width:1.00px;height:25.00px;background:#d0d0d0;"></div>
<div style="position:absolute;left:145.2px;top:125px;font-family:'Liberation Serif',serif;font-style:italic;font-size:15px;line-height:16px;color:#555;letter-spacing:-0.5px;">fx</div>
<div style="position:absolute;left:166.30px;top:127.00px;width:1.00px;height:14.00px;background:#dedede;"></div>
<div class="t" style="left:174.07px;top:127px;font-size:12.50px;line-height:17px;height:17px;color:#111;transform:scaleX(0.9787);">1.79</div>
<svg style="position:absolute;left:0;top:0" width="1023" height="170" viewBox="0 0 1023 170"><rect x="16.9" y="4.5" width="14" height="11.8" rx="1.4" fill="none" stroke="#f2f6f3" stroke-width="1.3"/><rect x="19.6" y="4.5" width="1.3" height="11.8" fill="#f2f6f3"/><rect x="17.9" y="7" width="0.9" height="0.9" fill="#f2f6f3"/><rect x="17.9" y="9" width="0.9" height="0.9" fill="#f2f6f3"/><rect x="17.9" y="11" width="0.9" height="0.9" fill="#f2f6f3"/><path d="M22.7,6.6 H27.3 L29.4,8.7 V14.8 H22.7 Z" fill="none" stroke="#f2f6f3" stroke-width="1.2"/><path d="M27,6.6 V9 H29.4 Z" fill="#f2f6f3"/><path d="M47.6,4.4 H59.6 V16.3 H49.3 L47.6,14.6 Z" fill="#f2f6f3"/><rect x="49.6" y="5.8" width="8.1" height="3.9" fill="#2a7a4e"/><rect x="51.2" y="12.2" width="5.2" height="4.1" fill="#2a7a4e"/><rect x="52.3" y="13.3" width="1.5" height="3" fill="#f2f6f3"/><path d="M79.3,8.8 C81,5.6 86.8,5.2 88.6,9 C90,12 87.5,15.5 85,16" fill="none" stroke="#f2f6f3" stroke-width="1.9"/><path d="M76.1,8.6 L76.1,15.6 L83.2,15.6 Z" fill="#f2f6f3"/><path d="M98.0,9.0 L103.0,9.0 L100.5,12.399999999999999 Z" fill="#d9e6dd"/><path d="M128.2,8.8 C126.5,5.6 120.7,5.2 118.9,9 C117.5,12 120,15.5 122.5,16" fill="none" stroke="#f2f6f3" stroke-width="1.9"/><path d="M131.2,8.6 L131.2,15.6 L124.1,15.6 Z" fill="#f2f6f3"/><rect x="148.7" y="6.5" width="8.2" height="1.3" fill="#f2f6f3"/><path d="M148.70000000000002,9.0 L156.9,9.0 L152.8,14.0 Z" fill="#f2f6f3"/><path d="M676.5,4.3 H683.6 L686.3,7 V17.6 H676.5 Z" fill="#e7efe9" stroke="#f6faf7" stroke-width="0.6"/><rect x="672.4" y="7.6" width="6.4" height="6.6" fill="#cfdcd3"/><rect x="680" y="9" width="5" height="0.8" fill="#8fb39c"/><rect x="680" y="11" width="5" height="0.8" fill="#8fb39c"/><rect x="680" y="13" width="5" height="0.8" fill="#8fb39c"/><rect x="680" y="15" width="5" height="0.8" fill="#8fb39c"/><path d="M39.5,73.2 L44.099999999999994,73.2 L41.8,76.2 Z" fill="#6a6a6a"/><rect x="7.9" y="62.6" width="21.3" height="24.1" rx="2" fill="#E9A23B"/><path d="M12.2,67 V63.5 C12.2,61.5 14,60.4 16,60.4 H17 C17.3,59.4 19.6,59.4 19.9,60.4 H21 C23,60.4 24.7,61.5 24.7,63.5 V67 Z" fill="#6d6d6d"/><path d="M15.1,70.6 H25.8 L30.2,75 V87.7 H15.1 Z" fill="#fff" stroke="#e0e0e0" stroke-width="0.5"/><path d="M25.8,70.6 V75 H30.2" fill="#e8e8e8" stroke="#d0d0d0" stroke-width="0.5"/><path d="M108.0,84.9 L112.4,84.9 L110.2,87.9 Z" fill="#6a6a6a"/><path d="M59.2,57 L66.6,67.2 M66.8,57 L59.4,67.2" stroke="#111" stroke-width="1.5" fill="none"/><circle cx="60.2" cy="69.2" r="1.9" fill="none" stroke="#2f6fd1" stroke-width="1.1"/><circle cx="66.2" cy="69.2" r="1.9" fill="none" stroke="#2f6fd1" stroke-width="1.1"/><path d="M58.5,82 H62.5 V93.5 H58.5 Z" fill="#fff" stroke="#b9b9b9" stroke-width="0.7"/><path d="M61.5,79.5 H66.2 L68.2,81.5 V90.2 H61.5 Z" fill="#fff" stroke="#b9b9b9" stroke-width="0.7"/><path d="M64.2,106.5 L70.4,100.8 L71.6,102 L65.8,108 Z" fill="#e9e2d6" stroke="#9a9a9a" stroke-width="0.5"/><path d="M57.2,109 L61.5,104.8 L65.6,108.6 L62,113.5 Z" fill="#8c6a4f"/><path d="M57.2,109 L62,113.5 L60.5,115 L57,110.5 Z" fill="#2d6ed1"/><path d="M224.2,70.75 L228.8,70.75 L226.5,73.75 Z" fill="#6a6a6a"/><path d="M278.95,70.75 L283.55,70.75 L281.25,73.75 Z" fill="#6a6a6a"/><path d="M309.8,73.0 L316.2,73.0 L313,69.80000000000001 Z" fill="#2f6fd1"/><path d="M336.2,70.7 L342.8,70.7 L339.5,74.10000000000001 Z" fill="#2f6fd1"/><path d="M219.39999999999998,99.2 L224.0,99.2 L221.7,102.2 Z" fill="#6a6a6a"/><path d="M261.2,99.2 L265.8,99.2 L263.5,102.2 Z" fill="#6a6a6a"/><rect x="238.3" y="92.6" width="16" height="15.6" fill="none" stroke="#b8b8b8" stroke-width="0.8" stroke-dasharray="1,1"/><path d="M246.3,92.6 V108.2 M238.3,100.4 H254.3" stroke="#b8b8b8" stroke-width="0.8" stroke-dasharray="1,1"/><rect x="238" y="108" width="16.6" height="1.1" fill="#444"/><path d="M301.7,99.2 L306.3,99.2 L304,102.2 Z" fill="#6a6a6a"/><path d="M340.2,99.2 L344.8,99.2 L342.5,102.2 Z" fill="#6a6a6a"/><path d="M280.2,97.5 L284.5,93.5 L289,98.2 L284.8,102.5 Z" fill="#fff" stroke="#444" stroke-width="0.9"/><path d="M283,93 C283.5,90.5 286,90.6 286.5,92.5 L286.5,96" fill="none" stroke="#444" stroke-width="0.8"/><path d="M287.5,95 C290,95.5 291,98 290,100.5" fill="none" stroke="#2f6fd1" stroke-width="1.2"/><rect x="277" y="105" width="17.3" height="4.6" rx="0.8" fill="#f5ec00"/><rect x="315.4" y="105.3" width="17.2" height="4.4" rx="0.8" fill="#ee1111"/><rect x="374" y="66.0" width="11.399999999999977" height="1.2" fill="#3a3a3a"/><rect x="374" y="69.0" width="11.399999999999977" height="1.2" fill="#3a3a3a"/><rect x="402" y="70.0" width="11.5" height="1.2" fill="#3a3a3a"/><rect x="402" y="73.0" width="11.5" height="1.2" fill="#3a3a3a"/><rect x="430" y="74.0" width="11.399999999999977" height="1.2" fill="#3a3a3a"/><rect x="430" y="77.0" width="11.399999999999977" height="1.2" fill="#3a3a3a"/><path d="M481.0,70.3 L485.6,70.3 L483.3,73.3 Z" fill="#6a6a6a"/><text x="0" y="0" transform="translate(462.8,78.8) rotate(-45)" font-family="Liberation Sans" font-size="10.5" fill="#333">ab</text><path d="M466.3,81 L475.6,72" stroke="#2f6fd1" stroke-width="1"/><path d="M473,71.6 L476.3,71.3 L476,74.6 Z" fill="#2f6fd1"/><rect x="372.8" y="95.80000000000001" width="11.199999999999989" height="1.2" fill="#3a3a3a"/><rect x="372.8" y="98.7" width="14.199999999999989" height="1.2" fill="#3a3a3a"/><rect x="372.8" y="101.80000000000001" width="11.199999999999989" height="1.2" fill="#3a3a3a"/><rect x="372.8" y="105.0" width="14.199999999999989" height="1.2" fill="#3a3a3a"/><rect x="401.5" y="95.80000000000001" width="11.5" height="1.2" fill="#3a3a3a"/><rect x="399.6" y="98.7" width="15.199999999999989" height="1.2" fill="#3a3a3a"/><rect x="401.5" y="101.80000000000001" width="11.5" height="1.2" fill="#3a3a3a"/><rect x="399.6" y="105.0" width="15.199999999999989" height="1.2" fill="#3a3a3a"/><rect x="431" y="95.80000000000001" width="11.300000000000011" height="1.2" fill="#3a3a3a"/><rect x="428.3" y="98.7" width="14.0" height="1.2" fill="#3a3a3a"/><rect x="431" y="101.80000000000001" width="11.300000000000011" height="1.2" fill="#3a3a3a"/><rect x="428.3" y="105.0" width="14.0" height="1.2" fill="#3a3a3a"/><rect x="468" y="95.80000000000001" width="8" height="1.2" fill="#3a3a3a"/><rect x="469.5" y="98.7" width="6.5" height="1.2" fill="#3a3a3a"/><rect x="469.5" y="101.80000000000001" width="6.5" height="1.2" fill="#3a3a3a"/><rect x="468" y="105.0" width="8" height="1.2" fill="#3a3a3a"/><path d="M459.4,101 L464,97.4 V99.6 H468 V102.4 H464 V104.6 Z" fill="#2f6fd1"/><rect x="496" y="95.80000000000001" width="8" height="1.2" fill="#3a3a3a"/><rect x="497.5" y="98.7" width="6.5" height="1.2" fill="#3a3a3a"/><rect x="497.5" y="101.80000000000001" width="6.5" height="1.2" fill="#3a3a3a"/><rect x="496" y="105.0" width="8" height="1.2" fill="#3a3a3a"/><path d="M496,101 L491.4,97.4 V99.6 H487.4 V102.4 H491.4 V104.6 Z" fill="#2f6fd1"/><path d="M532.5,67 H541.5 M532.5,70 H538.5 M532.5,73 H538.5 M532.5,76.5 H536" stroke="#777" stroke-width="0.8"/><rect x="532.2" y="66.8" width="9.5" height="11.4" fill="none" stroke="#c4c4c4" stroke-width="0.6"/><path d="M545.5,68.5 C549,68.5 550.5,71.5 549.5,74 C548.8,76 547,77 545,77" fill="none" stroke="#2f6fd1" stroke-width="1.5"/><path d="M544.2,74.5 L544.2,79.5 L547.4,77 Z" fill="#2f6fd1"/><path d="M637.5,99.3 L642.0999999999999,99.3 L639.8,102.3 Z" fill="#6a6a6a"/><rect x="533.4" y="93" width="14.8" height="14.9" fill="#fff" stroke="#c4c4c4" stroke-width="0.7"/><path d="M540.8,93 V96.5 M540.8,104.5 V108" stroke="#c4c4c4" stroke-width="0.6"/><path d="M536,100.5 H545.7" stroke="#2f6fd1" stroke-width="1.1"/><path d="M535.3,100.5 L537.8,98.6 V102.4 Z M546.4,100.5 L543.9,98.6 V102.4 Z" fill="#2f6fd1"/><path d="M805.9000000000001,70.5 L810.5,70.5 L808.2,73.5 Z" fill="#6a6a6a"/><path d="M690.2,99.3 L694.8,99.3 L692.5,102.3 Z" fill="#6a6a6a"/><ellipse cx="677.3" cy="101.6" rx="4.8" ry="2.0" fill="#F2B01E" stroke="#a8740c" stroke-width="0.6"/><ellipse cx="677.3" cy="99.4" rx="4.8" ry="2.0" fill="#F2B01E" stroke="#a8740c" stroke-width="0.6"/><ellipse cx="677.3" cy="97.2" rx="4.8" ry="2.0" fill="#F2B01E" stroke="#a8740c" stroke-width="0.6"/><ellipse cx="670.3" cy="105.3" rx="4.8" ry="2.0" fill="#F2B01E" stroke="#a8740c" stroke-width="0.6"/><ellipse cx="670.3" cy="103.0" rx="4.8" ry="2.0" fill="#F2B01E" stroke="#a8740c" stroke-width="0.6"/><path d="M737.2,96.3 C743.5,97 744.5,105 737.4,106.8 C739.8,104.5 741,100.5 738.6,99.2 C737.4,98.6 736.8,97.2 737.2,96.3 Z" fill="#333"/><path d="M765.3,97.5 L768.8,94.9 V96.4 H773 V98.6 H768.8 V100.1 Z" fill="#2f6fd1"/><path d="M800.5,105 L797,102.4 V103.9 H792.8 V106.1 H797 V107.6 Z" fill="#2f6fd1"/><path d="M874.2,73.3 L878.8,73.3 L876.5,76.3 Z" fill="#6a6a6a"/><rect x="841.8" y="63.4" width="6.2" height="5.7" fill="#fff" stroke="#cfcfcf" stroke-width="0.6"/><rect x="848.0" y="63.4" width="6.2" height="5.7" fill="#fff" stroke="#cfcfcf" stroke-width="0.6"/><rect x="854.2" y="63.4" width="6.2" height="5.7" fill="#fff" stroke="#cfcfcf" stroke-width="0.6"/><rect x="860.4" y="63.4" width="6.2" height="5.7" fill="#fff" stroke="#cfcfcf" stroke-width="0.6"/><rect x="841.8" y="69.1" width="6.2" height="5.7" fill="#fff" stroke="#cfcfcf" stroke-width="0.6"/><rect x="848.0" y="69.1" width="6.2" height="5.7" fill="#fff" stroke="#cfcfcf" stroke-width="0.6"/><rect x="854.2" y="69.1" width="6.2" height="5.7" fill="#fff" stroke="#cfcfcf" stroke-width="0.6"/><rect x="860.4" y="69.1" width="6.2" height="5.7" fill="#fff" stroke="#cfcfcf" stroke-width="0.6"/><rect x="841.8" y="74.8" width="6.2" height="5.7" fill="#fff" stroke="#cfcfcf" stroke-width="0.6"/><rect x="848.0" y="74.8" width="6.2" height="5.7" fill="#fff" stroke="#cfcfcf" stroke-width="0.6"/><rect x="854.2" y="74.8" width="6.2" height="5.7" fill="#fff" stroke="#cfcfcf" stroke-width="0.6"/><rect x="860.4" y="74.8" width="6.2" height="5.7" fill="#fff" stroke="#cfcfcf" stroke-width="0.6"/><rect x="841.8" y="80.5" width="6.2" height="5.7" fill="#fff" stroke="#cfcfcf" stroke-width="0.6"/><rect x="848.0" y="80.5" width="6.2" height="5.7" fill="#fff" stroke="#cfcfcf" stroke-width="0.6"/><rect x="854.2" y="80.5" width="6.2" height="5.7" fill="#fff" stroke="#cfcfcf" stroke-width="0.6"/><rect x="860.4" y="80.5" width="6.2" height="5.7" fill="#fff" stroke="#cfcfcf" stroke-width="0.6"/><rect x="848" y="63.2" width="5.8" height="4.6" fill="#e0484f"/><rect x="848" y="67.8" width="10" height="5.4" fill="#3d8ee3"/><rect x="848" y="73.2" width="12.4" height="5.2" fill="#e0484f"/><rect x="848" y="78.4" width="5.8" height="7" fill="#3d8ee3"/><rect x="855.4" y="76.6" width="14" height="11.8" fill="#fff" stroke="#a0a0a0" stroke-width="0.7"/><path d="M858.4,80.8 H866.4 M858.4,84 H866.4 M864.2,78.6 L860.6,86.2" stroke="#333" stroke-width="0.9"/><path d="M929.7,73.3 L934.3,73.3 L932,76.3 Z" fill="#6a6a6a"/><rect x="896.4" y="64.2" width="6.4" height="5.3" fill="#fff" stroke="#c6d3e2" stroke-width="0.6"/><rect x="902.8" y="64.2" width="6.4" height="5.3" fill="#fff" stroke="#c6d3e2" stroke-width="0.6"/><rect x="909.2" y="64.2" width="6.4" height="5.3" fill="#fff" stroke="#c6d3e2" stroke-width="0.6"/><rect x="915.6" y="64.2" width="6.4" height="5.3" fill="#fff" stroke="#c6d3e2" stroke-width="0.6"/><rect x="896.4" y="69.5" width="6.4" height="5.3" fill="#fff" stroke="#c6d3e2" stroke-width="0.6"/><rect x="902.8" y="69.5" width="6.4" height="5.3" fill="#cfe0f4" stroke="#c6d3e2" stroke-width="0.6"/><rect x="909.2" y="69.5" width="6.4" height="5.3" fill="#cfe0f4" stroke="#c6d3e2" stroke-width="0.6"/><rect x="915.6" y="69.5" width="6.4" height="5.3" fill="#cfe0f4" stroke="#c6d3e2" stroke-width="0.6"/><rect x="896.4" y="74.8" width="6.4" height="5.3" fill="#fff" stroke="#c6d3e2" stroke-width="0.6"/><rect x="902.8" y="74.8" width="6.4" height="5.3" fill="#cfe0f4" stroke="#c6d3e2" stroke-width="0.6"/><rect x="909.2" y="74.8" width="6.4" height="5.3" fill="#cfe0f4" stroke="#c6d3e2" stroke-width="0.6"/><rect x="915.6" y="74.8" width="6.4" height="5.3" fill="#cfe0f4" stroke="#c6d3e2" stroke-width="0.6"/><rect x="896.4" y="80.1" width="6.4" height="5.3" fill="#fff" stroke="#c6d3e2" stroke-width="0.6"/><rect x="902.8" y="80.1" width="6.4" height="5.3" fill="#cfe0f4" stroke="#c6d3e2" stroke-width="0.6"/><rect x="909.2" y="80.1" width="6.4" height="5.3" fill="#cfe0f4" stroke="#c6d3e2" stroke-width="0.6"/><rect x="915.6" y="80.1" width="6.4" height="5.3" fill="#cfe0f4" stroke="#c6d3e2" stroke-width="0.6"/><path d="M909.5,82.5 L924.8,67.2 C925.8,66.2 927.6,67.6 926.6,68.8 L913.2,85.8 Z" fill="#fafafa" stroke="#9a9a9a" stroke-width="0.6"/><circle cx="911.3" cy="84.2" r="3.3" fill="#E3A43A"/><path d="M908.8,85 C907.5,87.8 904.2,88.8 901.8,88.9 C903.5,86.8 905,83.6 908.2,82.4 C909.6,82.2 910.6,83.6 908.8,85 Z" fill="#2f6fd1"/><path d="M63.199999999999996,130.6 L69.39999999999999,130.6 L66.3,126.4 Z" fill="#666"/><path d="M63.199999999999996,134.70000000000002 L69.39999999999999,134.70000000000002 L66.3,138.9 Z" fill="#666"/><path d="M89.5,130 L99.5,139.5 M99.5,130 L89.5,139.5" stroke="#c4c4c4" stroke-width="1.6"/><path d="M116.5,134.5 L121,139 L129.3,130" fill="none" stroke="#c4c4c4" stroke-width="1.6"/><path d="M1.5,167 L12.5,167 L12.5,153.5 Z" fill="#d6d6d6"/></svg>
</body></html>
